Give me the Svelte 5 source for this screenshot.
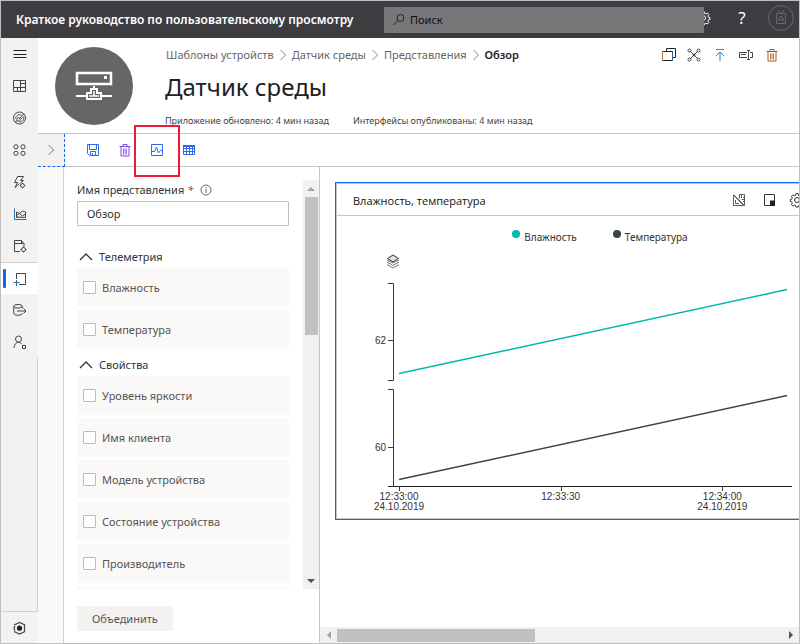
<script>
  const nav = ['menu', 'dashboard', 'compass', 'groups', 'rules', 'analytics', 'jobs', 'templates', 'export', 'admin'];
  const navLabels = ['Меню', 'Панель мониторинга', 'Устройства', 'Группы устройств', 'Правила', 'Аналитика', 'Задания', 'Шаблоны устройств', 'Экспорт данных', 'Администрирование'];
  const crumbs = ['Шаблоны устройств', 'Датчик среды', 'Представления'];
  const actions = [['copy', 'Версия'], ['nodes', 'Управление'], ['publish', 'Опубликовать'], ['rename', 'Переименовать'], ['trash', 'Удалить']];
  const tools = [['save', 'Сохранить'], ['trash', 'Удалить'], ['chart', 'Диаграмма'], ['grid', 'Таблица']];
  const sections = [
    { title: 'Телеметрия', items: ['Влажность', 'Температура'] },
    { title: 'Свойства', items: ['Уровень яркости', 'Имя клиента', 'Модель устройства', 'Состояние устройства', 'Производитель'] }
  ];

  let viewName = $state('Обзор');
  let width = $state(462);

  const plotLeft = 62;
  let axisEnd = $derived(width - 7);
  let plotEnd = $derived(width - 12);
  const at = (t) => plotLeft + (t / 72) * (plotEnd - plotLeft);
  let ticks = $derived([
    { x: at(0), time: '12:33:00', date: '24.10.2019' },
    { x: at(30), time: '12:33:30', date: '' },
    { x: at(60), time: '12:34:00', date: '24.10.2019' }
  ]);
</script>

{#snippet icon(name)}
  <svg class="icon" width="16" height="16" viewBox="0 0 16 16" fill="none" stroke="currentColor" aria-hidden="true">
    {#if name === 'menu'}
      <path d="M1.500 4.500h13M1.500 8.500h13M1.500 11.500h13" stroke="#222" />
    {:else if name === 'dashboard'}
      <path d="M1.500 2.500h12v11h-12zM8.500 2.500v11M1.500 9.500h7M8.500 5.500h5M8.500 9.500h5M5.500 9.500v4" />
    {:else if name === 'compass'}
      <circle cx="7.500" cy="8" r="6" /><circle cx="6.500" cy="9.500" r="1.700" />
      <path d="M7.700 8.300L12 3.700M3 12.500l2.300-2M3.500 8.500c.5-3 3-4.500 6-3.500M11.500 6.500c1 3-1 5.500-4 5.500M9 9l1.500-1.500" />
    {:else if name === 'groups'}
      <circle cx="4" cy="4.800" r="2.100" /><circle cx="11" cy="4.800" r="2.100" /><circle cx="4" cy="11.300" r="2.100" /><circle cx="11" cy="11.300" r="2.100" />
    {:else if name === 'rules'}
      <path d="M5.500 2.500h6L8.500 6.500h3L8.500 9M5.500 2.500L2.500 8.500h3L3 13.500L7.500 9.500" /><circle cx="10.500" cy="11.500" r="1.900" /><path d="M10.500 8.800v1M10.500 13.200v1M7.800 11.500h1M12.200 11.500h1" />
    {:else if name === 'analytics'}
      <path d="M2.500 2.500v11h12" stroke="#2f6fae" /><path d="M4.500 11V6l3 1.500 3-2.500 3 1v5.500zM4.500 9.500l3-2 3 2.500 3-2" /><path d="M4 11.500h10" stroke="#666" />
    {:else if name === 'jobs'}
      <path d="M8 13.500H2.500V2.500h7l2.500 3v3M2.500 5.500h9M9.500 3v2.500" /><circle cx="11.500" cy="11.500" r="2" /><path d="M11.500 8.500v1M11.500 13.500v1M8.500 11.500h1M13.500 11.500h1" />
    {:else if name === 'templates'}
      <path d="M4.500 8V2.500h9v11H7" /><path d="M4.500 9v6M1.500 11.500h6" stroke="#2c6d91" /><path d="M13.500 2v12" stroke="#8b2e60" />
    {:else if name === 'export'}
      <ellipse cx="6" cy="4.300" rx="4.300" ry="1.800" /><path d="M1.700 4.300v7c0 2.600 8.600 2.600 8.600 0M10.300 4.300v2M5 9h9M11.500 6.500L14 9l-2.500 2.500" />
    {:else if name === 'admin'}
      <circle cx="6.500" cy="5" r="3" /><path d="M2 14c0-3.500 2-5.500 4.500-5.500 1.600 0 2.700.6 3.400 1.700M10.500 11.500h3v3h-3z" />
    {:else if name === 'copy'}
      <path d="M6.500 4V1.500h9v9H13M3 4.500h9.500v9h-10v-9z" stroke="#222" /><path d="M2.500 4v10" stroke="#c07a3a" /><path d="M12.500 4v10" stroke="#2f5f8f" />
    {:else if name === 'nodes'}
      <path d="M4 4l8 8M12 4l-8 8" /><circle cx="3.500" cy="3.500" r="1.500" /><circle cx="12.500" cy="3.500" r="1.500" /><circle cx="3.500" cy="12.500" r="1.500" /><circle cx="12.500" cy="12.500" r="1.500" /><circle cx="8" cy="8" r="1" fill="#333" />
    {:else if name === 'publish'}
      <path d="M4 2.500h8" stroke="#777" /><path d="M8 14V5M4 9l4-4 4 4" stroke="#387cc0" />
    {:else if name === 'rename'}
      <path d="M9 5.500H1.500v5H9M3 7.500h5M12 5.500h2.500v5H12" /><path d="M10.500 3.500v9M9 3.500h3M9 12.500h3" />
    {:else if name === 'trash'}
      <path d="M2.500 4.500h11M6 4V2.500h4V4" /><path d="M4 5v9h8V5" /><path d="M6.500 6.500v6M8 6.500v6M9.500 6.500v6" stroke-width=".8" />
    {:else if name === 'save'}
      <path d="M2.500 2.500h11v11h-9l-2-2zM4.500 2.500v5h7v-5M5.500 13v-3.500h5V13M7.500 11v2" />
    {:else if name === 'chart'}
      <path d="M2.500 2.500h11v11h-11z" /><path d="M3 9.500h2.500L7.500 5l2 6 2-2.500h2" />
    {:else if name === 'grid'}
      <path d="M2 3h12v2H2z" fill="currentColor" stroke="none" /><path d="M2.500 3.500h11v9h-11zM2.500 6.500h11M2.500 9.500h11M5.500 5v8M8.500 5v8M11.500 5v8" />
    {:else if name === 'gear'}
      <circle cx="8" cy="8" r="2.500" /><path d="M8 1.500l1.200.2.4 1.700 1.300.5 1.500-.9 1.400 1.500-.9 1.500.5 1.200 1.500.4v1.800l-1.500.4-.5 1.300.9 1.500-1.400 1.400-1.500-.9-1.300.5-.4 1.500H7l-.4-1.500-1.300-.5-1.500.9-1.400-1.400.9-1.500-.5-1.300-1.500-.4V7.500l1.500-.4.5-1.200-.9-1.500 1.400-1.500 1.500.9 1.300-.5.4-1.700z" />
    {:else if name === 'eye'}
      <path d="M2 5L7.500 2.500L13 5M2 11.500L7.500 14L13 11.500M3 6C1.800 7.500 1.800 9 3 10.500M12.500 5v6.500" stroke-width="1.200" /><circle cx="7.500" cy="8.200" r="2.600" fill="#222" stroke="none" />
    {:else if name === 'measure'}
      <path d="M2.500 3v10.500h10zM4.500 8v3.500H8M3 3l10.500 10.500M8.500 6.500v-4h5v11M10.500 3v3M10.500 7.500h3M12 5.500h1.500M12 9.500h1.500" stroke-width=".8" />
    {:else if name === 'resize'}
      <path d="M2.500 2.500h10v11h-10z" /><path d="M8 8.500h5V14H8z" fill="#222" stroke="none" />
    {/if}
  </svg>
{/snippet}

<div class="app">
  <header class="top">
    <div class="brand">Краткое руководство по пользовательскому просмотру</div>
    <label class="search">
      <svg width="14" height="14" viewBox="0 0 14 14" fill="none" stroke="#262329" aria-hidden="true"><circle cx="8.500" cy="5" r="3.500" /><path d="M6 7.500L1.500 12" /></svg>
      <input type="search" placeholder="Поиск" aria-label="Поиск" />
    </label>
    <div class="account">
      <button class="settings" aria-label="Параметры">{@render icon('gear')}</button>
      <button class="help" aria-label="Справка">?</button>
      <button class="avatar" aria-label="Учетная запись">
        <svg width="26" height="26" viewBox="0 0 26 26" fill="none" stroke="#69686c" aria-hidden="true">
          <circle cx="13" cy="13" r="12.400" /><path d="M8.500 8.500h9v10h-9zM10 5l3 3.500L16 5M11 16.500v-3l2-2.500 2 2.500v3M11 14.500h4" />
        </svg>
      </button>
    </div>
  </header>

  <div class="body">
    <nav class="rail" aria-label="Навигация">
      {#each nav as name, i}
        <button class:active={name === 'templates'} aria-label={navLabels[i]}>{@render icon(name)}</button>
      {/each}
      <div class="spacer"></div>
      <button class="bottom" aria-label="Просмотр">{@render icon('eye')}</button>
    </nav>

    <main>
      <section class="hero">
        <div class="badge">
          <svg width="38" height="30" viewBox="0 0 38 30" fill="none" stroke="#fff" stroke-width="2.500" aria-hidden="true">
            <path d="M2 2h34v11H2z" /><path d="M29 5h3v3h-3z" fill="#fff" stroke="none" />
            <path d="M19 15v3M1 25h10M27 25h10M16 18h6v4h4v6H12v-6h4z" stroke-width="2" /><path d="M19 20v5M14 25h10" stroke-width="1.500" />
          </svg>
        </div>
        <div class="heading">
          <div class="line">
            <nav class="crumbs" aria-label="Путь">
              {#each crumbs as crumb}
                <a href="#top">{crumb}</a>
                <svg width="8" height="12" viewBox="0 0 8 12" fill="none" stroke="#8a8886" aria-hidden="true"><path d="M1.500 1l5 5-5 5" /></svg>
              {/each}
              <strong>Обзор</strong>
            </nav>
            <div class="actions">
              {#each actions as [name, label]}
                <button class={name} aria-label={label}>{@render icon(name)}</button>
              {/each}
            </div>
          </div>
          <h1>Датчик среды</h1>
          <div class="meta">
            <span>Приложение обновлено: 4 мин назад</span>
            <span>Интерфейсы опубликованы: 4 мин назад</span>
          </div>
        </div>
      </section>

      <div class="toolbar">
        <button class="expand" aria-label="Развернуть">
          <svg width="8" height="12" viewBox="0 0 8 12" fill="none" stroke="#77727a" aria-hidden="true"><path d="M1.500 1l5 5-5 5" /></svg>
        </button>
        <div class="tools">
          {#each tools as [name, label]}
            <button class={name} class:marked={name === 'chart'} aria-label={label}>{@render icon(name)}</button>
          {/each}
        </div>
      </div>

      <div class="workspace">
        <div class="gutter"></div>
        <form class="panel" onsubmit={(e) => e.preventDefault()}>
          <div class="scroll">
            <div class="fields">
              <div class="caption">
                <label for="view-name">Имя представления <em>*</em></label>
                <svg width="12" height="12" viewBox="0 0 12 12" fill="none" stroke="#666" aria-hidden="true"><circle cx="6" cy="6" r="5" /><path d="M6 5v4M6 3v1" stroke="#2f6fae" /></svg>
              </div>
              <input id="view-name" class="name" type="text" bind:value={viewName} />
              {#each sections as section}
                <fieldset>
                  <legend>
                    <svg width="14" height="8" viewBox="0 0 14 8" fill="none" stroke="#333" stroke-width="1.300" aria-hidden="true"><path d="M1 7l6-6 6 6" /></svg>
                    {section.title}
                  </legend>
                  {#each section.items as item}
                    <label class="option"><input type="checkbox" />{item}</label>
                  {/each}
                </fieldset>
              {/each}
              <div class="next-option"></div>
            </div>
            <div class="vbar" aria-hidden="true"><i class="up"></i><b></b><i class="down"></i></div>
          </div>
          <div class="footer"><button>Объединить</button></div>
        </form>

        <section class="canvas">
          <article class="card">
            <header>
              <h2>Влажность, температура</h2>
              <div class="card-tools">
                <button aria-label="Измерить">{@render icon('measure')}</button>
                <button aria-label="Размер">{@render icon('resize')}</button>
                <button aria-label="Настроить">{@render icon('gear')}</button>
              </div>
            </header>
            <div class="graph" bind:clientWidth={width}>
              <ul class="key">
                <li><i class="teal"></i>Влажность</li>
                <li><i class="slate"></i>Температура</li>
              </ul>
              <svg class="layers" width="14" height="15" viewBox="0 0 14 15" fill="none" stroke="#777" aria-hidden="true">
                <path d="M1 8l6 3.500L13 8M1 10.500L7 14l6-3.500M1 6l6 3 6-3" /><path d="M7 1l5.500 3.500L7 8L1.500 4.500z" fill="#ddd" stroke="#333" />
              </svg>
              <svg class="plot" {width} height="245" role="img" aria-label="Влажность и температура">
                <g fill="none" stroke="#3a3a3a">
                  <path d="M51 14.500h5.500v97H51M51 71.500h5.500M51 120.500h5.500v97M51 178.500h5.500" />
                  <path d="M51 217.500H{axisEnd}" stroke="#222" />
                  {#each ticks as tick}<path d="M{Math.round(tick.x) + 0.5} 217v5" />{/each}
                </g>
                <path d="M{plotLeft} 104.500L{plotEnd} 20.500" stroke="#01b8aa" stroke-width="1.500" />
                <path d="M{plotLeft} 210.500L{plotEnd} 126.500" stroke="#374649" stroke-width="1.500" />
                <text x="49" y="75" text-anchor="end">62</text>
                <text x="49" y="182" text-anchor="end">60</text>
                {#each ticks as tick}
                  <text x={tick.x} y="231" text-anchor="middle">{tick.time}</text>
                  <text x={tick.x} y="241" text-anchor="middle">{tick.date}</text>
                {/each}
              </svg>
            </div>
          </article>
          <div class="hbar" aria-hidden="true"><i class="prev"></i><b></b><i class="next"></i></div>
        </section>
      </div>
    </main>
  </div>
</div>

<style>
  :global(body) { margin: 0; }
  .app, .app * { box-sizing: border-box; }
  .app {
    height: 100vh;
    min-height: 500px;
    display: flex;
    flex-direction: column;
    overflow: hidden;
    border: 1px solid #bfbfbf;
    background: #fff;
    color: #333;
    font: 11px/16px "Noto Sans", "Open Sans", sans-serif;
  }
  button, input { font: inherit; color: inherit; }
  button { display: flex; align-items: center; justify-content: center; padding: 0; border: 0; background: none; }
  svg { display: block; flex: none; }

  .top { display: flex; flex: 0 0 37px; align-items: center; background: #3d3c41; color: #fff; }
  .brand { flex: 0 0 383px; padding-left: 15px; font-weight: 600; font-size: 12px; white-space: nowrap; }
  .search { position: relative; z-index: 1; display: flex; flex: 1; align-items: center; gap: 4px; height: 26px; padding-left: 8px; border-radius: 1px; background: #777678; }
  .search input { flex: 1; min-width: 0; padding: 0; border: 0; outline: 0; background: none; font-size: 11px; color: #111; }
  .search input::placeholder { color: #111; opacity: 1; }
  .account { display: flex; flex: 0 0 95px; align-items: center; height: 33px; margin-bottom: 4px; }
  .settings { width: 16px; margin-left: -9px; }
  .help { width: 34px; margin-left: 14px; font-size: 17px; }
  .avatar { margin-left: 9px; }

  .body { display: flex; flex: 1; min-height: 0; }
  .rail { display: flex; flex: 0 0 37px; flex-direction: column; background: #f3f2f1; color: #444; }
  .rail button { flex: 0 0 32px; }
  .rail .bottom { flex-basis: 31px; }
  .rail .active { background: #fff; position: relative; border-top: 1px solid #d2d0ce; }
  .rail .active::before { content: ""; position: absolute; left: 2px; top: 6px; bottom: 6px; width: 3px; border-radius: 1px; background: #1267f1; }
  .spacer { flex: 1; border-right: 1px solid #d2d0ce; border-bottom: 1px solid #d2d0ce; }

  main { display: flex; flex: 1; flex-direction: column; min-width: 0; }
  .hero { display: flex; flex: 0 0 96px; gap: 32px; padding: 9px 19px 0 17px; border-bottom: 1px solid #c8c6c4; }
  .badge { display: flex; flex: none; align-items: center; justify-content: center; width: 78px; height: 78px; border-radius: 50%; background: #666; }
  .heading { flex: 1; min-width: 0; }
  .line, .crumbs, .actions, .meta { display: flex; align-items: center; }
  .line { justify-content: space-between; }
  .crumbs { gap: 5px; padding-left: 1px; color: #666; white-space: nowrap; }
  .crumbs a { color: inherit; text-decoration: none; }
  .crumbs strong { color: #222; font-weight: 600; }
  .actions { gap: 10px; color: #444; }
  .actions .trash { color: #a45a20; }
  h1 { margin: 6px 0 0; font-size: 24px; line-height: 36px; font-weight: 400; color: #222; }
  .meta { gap: 24px; margin-top: 8px; font-size: 9px; white-space: nowrap; color: #444; }

  .toolbar { display: flex; flex: 0 0 33px; align-items: stretch; border-bottom: 1px solid #c8c6c4; }
  .expand { position: relative; width: 27px; margin-bottom: -1px; border-right: 1px dashed #1267f1; border-bottom: 1px dashed #1267f1; background: #f3f2f1; }
  .tools { display: flex; padding-left: 12px; }
  .tools button { width: 32px; color: #3069e8; }
  .tools .trash { color: #7b4be6; }
  .marked { position: relative; }
  .marked::after { content: ""; position: absolute; inset: -9px -7px -11px -7px; border: 2px solid #ec1c38; }

  .workspace { display: flex; flex: 1; min-height: 0; }
  .gutter { flex: 0 0 26px; border-right: 1px solid #d2d0ce; background: #faf9f8; }
  .panel { display: flex; flex: 0 0 256px; flex-direction: column; padding-top: 13px; border-right: 1px solid #c8c6c4; }
  .scroll { display: flex; flex: 1; min-height: 0; overflow: hidden; }
  .fields { flex: 1; padding: 0 14px 0 13px; overflow: hidden; }
  .caption { display: flex; align-items: center; gap: 7px; height: 21px; padding-bottom: 2px; }
  .caption em { color: #a4262c; }
  .name { display: block; width: 100%; height: 25px; padding: 0 9px; border: 1px solid #c0bfbd; border-radius: 1px; background: #fff; }
  fieldset { min-width: 0; margin: 2px 0 0; padding: 0; border: 0; }
  .name + fieldset { margin-top: 20px; }
  legend { display: flex; align-items: center; gap: 6px; height: 22px; padding: 0 0 0 2px; }
  .option { display: flex; align-items: center; gap: 6px; height: 39px; margin-bottom: 3px; padding-left: 6px; background: #faf9f8; color: #555; }
  .option input { appearance: none; width: 13px; height: 13px; margin: 0; border: 1px solid #bbb; border-radius: 1px; background: #fff; }
  .next-option { height: 39px; background: #faf9f8; }
  .vbar { display: flex; flex: 0 0 16px; flex-direction: column; align-items: center; background: #f1f1f1; }
  .vbar b { width: 13px; height: 138px; background: #c1c1c1; }
  .vbar i, .hbar i { display: flex; align-items: center; justify-content: center; flex: 0 0 17px; }
  .vbar i::before, .hbar i::before { content: ""; border: 4px solid transparent; }
  .vbar .up::before { border-top: 0; border-bottom-color: #a3a3a3; }
  .vbar .down { margin-top: auto; }
  .vbar .down::before { border-bottom: 0; border-top-color: #505050; }
  .footer { flex: 0 0 54px; padding: 17px 13px 12px; }
  .footer button { height: 25px; padding: 0 15px; background: #f3f2f1; color: #555; }

  .canvas { display: flex; flex: 1; flex-direction: column; min-width: 0; overflow: hidden; }
  .card { margin: 15px 0 0 15px; border: 1px solid #1267f1; border-right: 0; box-shadow: inset 1px 1px #c8c6c4, inset 0 -1px #c8c6c4; padding: 1px 0 1px 1px; }
  .card header { display: flex; align-items: center; justify-content: space-between; height: 32px; padding-left: 16px; overflow: hidden; border-bottom: 1px solid #c8c6c4; }
  h2 { margin: 0; padding-top: 2px; font: 400 11px/16px "Open Sans", "Noto Sans", sans-serif; color: #111; }
  .card-tools { display: flex; gap: 15px; margin-right: -6px; }
  .card-tools button:last-child { margin-left: -4px; }
  .graph { height: 302px; overflow: hidden; color: #333; }
  .key { display: flex; justify-content: center; gap: 36px; height: 38px; margin: 0; padding: 12px 0 0 64px; list-style: none; font-size: 10px; }
  .key li { display: flex; gap: 4px; height: 18px; line-height: 18px; }
  .key i { width: 8px; height: 8px; margin-top: 2px; border-radius: 50%; }
  .teal { background: #01b8aa; }
  .slate { background: #374649; }
  .layers { margin-left: 49px; }
  .plot text { font: 10px "Liberation Sans", sans-serif; fill: #333; }
  .hbar { display: flex; align-items: center; height: 16px; margin-top: auto; background: #f1f1f1; }
  .hbar b { width: 198px; height: 13px; background: #c1c1c1; }
  .hbar .prev::before { border-left: 0; border-right-color: #a3a3a3; }
  .hbar .next { margin-left: auto; }
  .hbar .next::before { border-right: 0; border-left-color: #505050; }
</style>
